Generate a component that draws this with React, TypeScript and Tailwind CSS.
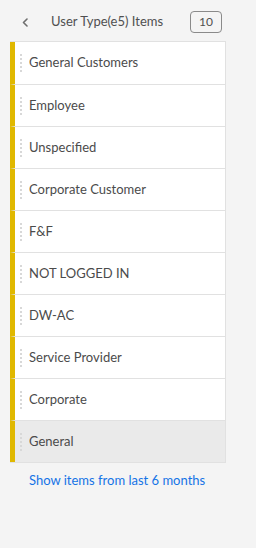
import React from "react";

const items = [
  "General Customers",
  "Employee",
  "Unspecified",
  "Corporate Customer",
  "F&F",
  "NOT LOGGED IN",
  "DW-AC",
  "Service Provider",
  "Corporate",
  "General",
];

export default function App() {
  return (
    <div
      className="w-[256px] h-[548px] bg-[#f4f4f4] text-[#4b4b4b]"
      style={{ fontFamily: 'Lato, "Open Sans", sans-serif' }}
    >
      <div className="h-[41px] pt-[3px] flex items-center pl-[22px] pr-[34px]">
        <svg width="6" height="9" viewBox="0 0 6 9" className="shrink-0">
          <path d="M5 1 L1.5 4.5 L5 8" fill="none" stroke="#6e6e6e" strokeWidth="1.6" strokeLinecap="round" strokeLinejoin="round" />
        </svg>
        <div className="ml-[23px] text-[13px] text-[#505050] flex-1">User Type(e5) Items</div>
        <div className="w-[32px] h-[22px] border border-[#8a8a8a] rounded-[4px] flex items-center justify-center text-[12px] text-[#505050]">
          10
        </div>
      </div>
      <div className="ml-[10px] w-[216px] border-t border-r border-b border-[#e1e1e1]">
        {items.map((it, i) => {
          const selected = i === items.length - 1;
          return (
            <div
              key={it}
              className={`h-[42px] flex items-center border-l-[5px] border-l-[#e0b800] ${
                i > 0 ? "border-t border-t-[#e1e1e1]" : ""
              } ${selected ? "bg-[#eaeaea]" : "bg-white"}`}
            >
              <div className="ml-[5px] h-[18px] border-l-2 border-dotted border-[#d8d8d8]" />
              <div className="ml-[7px] text-[13px] text-[#4b4b4b]">{it}</div>
            </div>
          );
        })}
      </div>
      <div className="pl-[29px] pt-[8px] text-[13px] text-[#1473e6]">
        Show items from last 6 months
      </div>
    </div>
  );
}
